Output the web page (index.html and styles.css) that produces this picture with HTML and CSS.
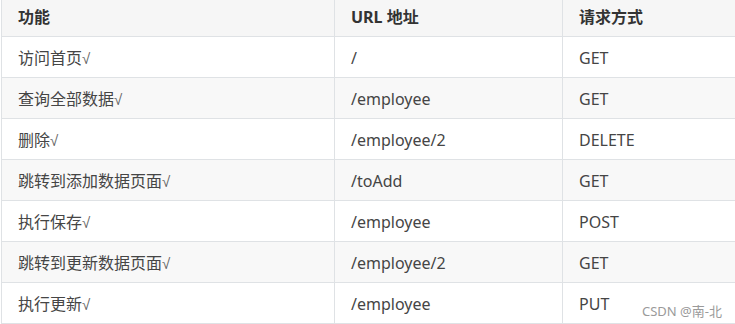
FILE: index.html
```html
<!DOCTYPE html>
<html lang="zh-CN">
<head>
<meta charset="utf-8">
<title>Table</title>
<link rel="stylesheet" href="styles.css">
</head>
<body>
<div class="wrap">
<table class="api-table">
  <thead>
    <tr><th class="c1">功能</th><th class="c2">URL 地址</th><th class="c3">请求方式</th></tr>
  </thead>
  <tbody>
    <tr><td>访问首页<span class="ok">√</span></td><td>/</td><td>GET</td></tr>
    <tr><td>查询全部数据<span class="ok">√</span></td><td>/employee</td><td>GET</td></tr>
    <tr><td>删除<span class="ok">√</span></td><td>/employee/2</td><td>DELETE</td></tr>
    <tr><td>跳转到添加数据页面<span class="ok">√</span></td><td>/toAdd</td><td>GET</td></tr>
    <tr><td>执行保存<span class="ok">√</span></td><td>/employee</td><td>POST</td></tr>
    <tr><td>跳转到更新数据页面<span class="ok">√</span></td><td>/employee/2</td><td>GET</td></tr>
    <tr><td>执行更新<span class="ok">√</span></td><td>/employee</td><td>PUT</td></tr>
  </tbody>
</table>
<div class="watermark">CSDN @南-北</div>
</div>
</body>
</html>
```
FILE: styles.css
```css
html, body {
  margin: 0;
  padding: 0;
  background: #ffffff;
  overflow: hidden;
}
.wrap {
  position: relative;
  width: 735px;
  height: 324px;
  overflow: hidden;
}
.api-table {
  margin: -5px 0 0 1px;
  border-collapse: collapse;
  width: 734px;
  table-layout: fixed;
  font-family: "Noto Sans", "Noto Sans CJK SC", sans-serif;
  font-size: 16px;
  color: #454545;
}
.api-table th,
.api-table td {
  box-sizing: border-box;
  border: 1px solid #dfe2e5;
  padding: 10px 16px 7px;
  line-height: 23px;
  text-align: left;
  white-space: nowrap;
}
.c1 { width: 333px; }
.c2 { width: 228px; }
.c3 { width: 173px; }
.api-table th {
  font-weight: 700;
  color: #333333;
  background: #f6f6f6;
}
.api-table tbody tr:nth-child(even) td {
  background: #f8f8f8;
}
.ok {
  font-family: "Liberation Sans", sans-serif;
  font-size: 15px;
  color: #666666;
}
.watermark {
  position: absolute;
  left: 642px;
  top: 301px;
  font-family: "Noto Sans", "Noto Sans CJK SC", sans-serif;
  font-size: 13px;
  color: #9a9a9a;
}
```
